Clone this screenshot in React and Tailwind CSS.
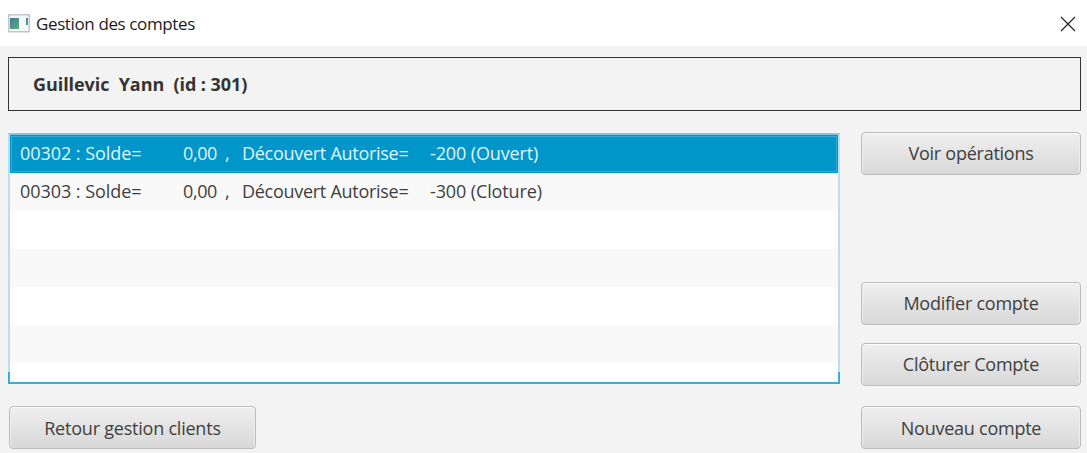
import React from "react";

const accounts = [
  { label: "00302 : Solde=", balance: "0,00", limit: "-200 (Ouvert)", selected: true },
  { label: "00303 : Solde=", balance: "0,00", limit: "-300 (Cloture)", selected: false },
];

function Button({ children, className = "pb-[2px]" }) {
  return (
    <button
      type="button"
      className={`h-[43px] shrink-0 whitespace-nowrap rounded-[4px] border border-[#bcbcbc] bg-linear-to-b from-[#efefef] to-[#d8d8d8] text-center text-[18px] leading-[38px] text-[#3f3f3f] shadow-[inset_0_1px_0_#fbfbfb,inset_1px_0_0_#ededed,inset_-1px_0_0_#ededed] ${className}`}
    >
      {children}
    </button>
  );
}

function AccountRow({ account }) {
  const tone = account.selected
    ? "bg-[#0096c9] text-[#e3f2f8] outline outline-[#37a9d3] -outline-offset-2"
    : "bg-[#f9f9f9] text-[#3f3f3f]";
  return (
    <div className={`flex h-[38px] shrink-0 whitespace-nowrap pl-[10px] text-[18px] leading-[37px] ${tone}`}>
      <span className="w-[163px] tracking-[-0.05px]">{account.label}</span>
      <span className="w-[42px] tracking-[-0.4px]">{account.balance}</span>
      <span className="w-[17px]">,</span>
      <span className="w-[188px] tracking-[-0.28px]">Découvert Autorise=</span>
      <span className="tracking-[-0.12px]">{account.limit}</span>
    </div>
  );
}

function AppIcon() {
  return (
    <svg width="22" height="19" viewBox="0 0 22 19" className="shrink-0">
      <defs>
        <linearGradient id="pane" x1="0" y1="0" x2="1" y2="1">
          <stop offset="0" stopColor="#437b9b" />
          <stop offset="1" stopColor="#5bad7b" />
        </linearGradient>
      </defs>
      <rect x="0.75" y="0.75" width="20.5" height="17" fill="#f7f8fa" stroke="#c3c6cc" strokeWidth="1.5" />
      <rect x="2" y="4" width="9" height="11" fill="url(#pane)" />
      <rect x="18" y="4" width="2" height="7" fill="url(#pane)" />
    </svg>
  );
}

export default function App() {
  return (
    <div className="flex h-[453px] w-[1087px] flex-col overflow-hidden bg-[#f3f3f3] font-['Open_Sans','Noto_Sans',sans-serif]">
      <header className="flex h-[46px] shrink-0 items-center bg-white pl-[8px] pr-[11px]">
        <AppIcon />
        <h1 className="ml-[6px] mt-[2px] grow text-[17px] leading-[24px] tracking-[-0.38px] text-[#1c1c1c]">
          Gestion des comptes
        </h1>
        <svg width="16" height="16" viewBox="0 0 16 16" stroke="#222" strokeWidth="1.2" className="mt-px">
          <path d="M1 1 15 15M15 1 1 15" />
        </svg>
      </header>

      <section className="ml-[8px] mt-[11px] h-[54px] w-[1073px] shrink-0 whitespace-pre border-[1.5px] border-[#333] pl-[24px] text-[18px] font-bold leading-[53px] tracking-[-0.06px] text-[#333]">
        {"Guillevic  Yann  (id : 301)"}
      </section>

      <div className="flex pl-[8px] pt-[21px]">
        <main className="flex w-[832px] flex-col">
          <div className="relative mt-px">
            <div className="flex h-[251px] flex-col overflow-hidden border-x-2 border-b-2 border-t-2 border-x-[#b6e0ee] border-b-[#39afd8] border-t-[#7fc9e4] bg-white">
              {accounts.map((account) => (
                <AccountRow key={account.label} account={account} />
              ))}
              <div className="h-[38px] shrink-0 bg-white" />
              <div className="h-[38px] shrink-0 bg-[#f9f9f9]" />
              <div className="h-[38px] shrink-0 bg-white" />
              <div className="h-[38px] shrink-0 bg-[#f9f9f9]" />
              <div className="grow bg-white" />
            </div>
            <span className="absolute bottom-0 left-0 h-[12px] w-[2px] bg-[#39afd8]" />
            <span className="absolute bottom-0 right-0 h-[12px] w-[2px] bg-[#39afd8]" />
          </div>
          <Button className="mt-[22px] ml-px w-[247px] tracking-[-0.22px]">Retour gestion clients</Button>
        </main>
        <aside className="ml-[21px] flex w-[220px] flex-col tracking-[-0.25px]">
          <Button>Voir opérations</Button>
          <Button className="mt-[107px] pb-[2px]">Modifier compte</Button>
          <Button className="mt-[18px] pb-[2px]">Clôturer Compte</Button>
          <Button className="mt-[20px]">Nouveau compte</Button>
        </aside>
      </div>
    </div>
  );
}
